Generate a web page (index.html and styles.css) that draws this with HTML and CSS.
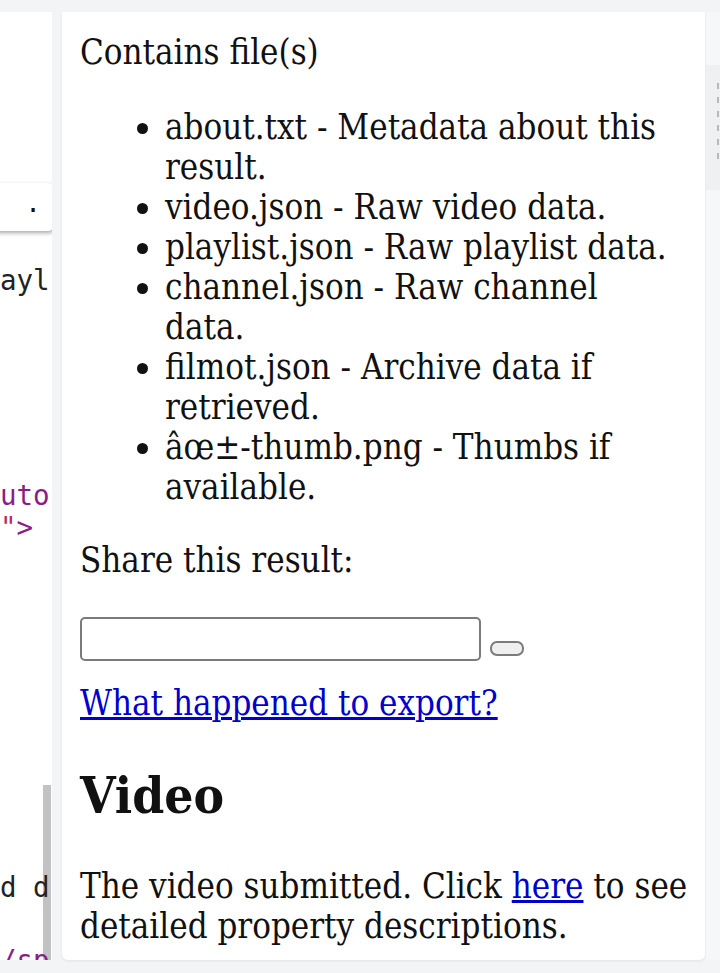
FILE: index.html
```html
<!DOCTYPE html>
<html lang="en">
<head>
<meta charset="utf-8">
<title>Result</title>
<link rel="stylesheet" href="styles.css">
</head>
<body>
<div class="layout">
  <aside class="code-pane">
    <div class="scrollbar"></div>
    <div class="hl-line">
      <span class="copy-btn">.</span>
    </div>
    <div class="code l-ayl">ayl</div>
    <div class="code l-uto purple">uto</div>
    <div class="code l-q"><span class="red">"</span><span class="purple">&gt;</span></div>
    <div class="code l-dd">d d</div>
    <div class="code l-sp purple">/sp</div>
  </aside>
  <main class="card">
    <p class="contains">Contains file(s)</p>
    <ul class="files">
      <li>about.txt - Metadata about this result.</li>
      <li>video.json - Raw video data.</li>
      <li>playlist.json - Raw playlist data.</li>
      <li>channel.json - Raw channel data.</li>
      <li>filmot.json - Archive data if retrieved.</li>
      <li>âœ±-thumb.png - Thumbs if available.</li>
    </ul>
    <p class="share">Share this result:</p>
    <div class="share-row">
      <input class="share-input" type="text" aria-label="Share link">
      <button class="copy" type="button" aria-label="Copy"></button>
    </div>
    <p class="export"><a href="#">What happened to export?</a></p>
    <h2 class="section">Video</h2>
    <p class="desc">The video submitted. Click <a href="#">here</a> to see detailed property descriptions.</p>
  </main>
  <aside class="side-pane">
    <div class="side-box">
      <span></span><span></span><span></span><span></span><span></span><span></span>
    </div>
  </aside>
</div>
</body>
</html>
```
FILE: styles.css
```css
html, body {
  margin: 0;
  padding: 0;
}
body {
  background: #f3f4f6;
  width: 720px;
  height: 973px;
  overflow: hidden;
}
.layout {
  display: flex;
  padding-top: 12px;
  height: 948px;
}
.code-pane {
  width: 52px;
  flex: none;
  background: #ffffff;
  position: relative;
  overflow: hidden;
  font-family: "DejaVu Sans Mono", monospace;
  font-size: 27.5px;
  line-height: 32px;
  color: #222;
  white-space: nowrap;
}
.hl-line {
  position: relative;
  margin-top: 178px;
  margin-left: 28px;
  height: 36px;
  background: #ebebeb;
}
.copy-btn {
  position: absolute;
  left: -40px;
  top: -7px;
  width: 66px;
  height: 48px;
  box-sizing: border-box;
  background: #fff;
  border-radius: 6px;
  box-shadow: 1px 2px 4px rgba(0,0,0,0.35);
  text-align: right;
  padding-right: 13px;
  line-height: 40px;
  font-size: 26px;
  color: #111;
}
.code {
  position: relative;
  height: 32px;
}
.l-ayl { margin-top: 38px; }
.l-uto { margin-top: 183px; }
.l-dd { margin-top: 328px; }
.l-sp { margin-top: 41px; }
.purple { color: #8a1d87; }
.red { color: #b0306a; }
.scrollbar {
  position: absolute;
  left: 43px;
  top: 773px;
  width: 8px;
  height: 175px;
  background: #c2c2c2;
}
.card {
  width: 643px;
  flex: none;
  margin-left: 10px;
  box-sizing: border-box;
  background: #ffffff;
  border-radius: 0 0 6px 6px;
  box-shadow: 0 1px 3px rgba(0,0,0,0.08);
  padding: 20px 8px 0 18px;
  font-family: "DejaVu Serif Condensed", "DejaVu Serif", "Liberation Serif", serif;
  font-stretch: condensed;
  font-size: 34.6px;
  line-height: 40px;
  color: #111;
}
.card p { margin: 0; }
.files {
  margin: 35px 0 0 0;
  padding: 0 22px 0 85px;
}
.share { margin-top: 33px !important; }
.share-row {
  display: flex;
  align-items: flex-end;
  margin-top: 37px;
}
.share-input {
  width: 401px;
  height: 44px;
  box-sizing: border-box;
  border: 2px solid #7b7b7b;
  border-radius: 5px;
  background: #fff;
  margin: 0;
  padding: 0;
}
.copy {
  width: 34px;
  height: 15px;
  margin: 0 0 5px 9px;
  padding: 0;
  box-sizing: border-box;
  border: 2px solid #7b7b7b;
  border-radius: 7px;
  background: #efefef;
}
.export { margin-top: 22px !important; }
a { color: #0000cc; }
.section {
  margin: 42px 0 0 0;
  font-size: 51px;
  line-height: 60px;
  font-weight: bold;
}
.desc { margin-top: 41px !important; }
.side-pane {
  flex: 1;
  margin-left: 1px;
  background: #f6f7f9;
}
.side-box {
  margin-top: 53px;
  height: 125px;
  background: #eef0f2;
  display: flex;
  flex-direction: column;
  align-items: flex-end;
  padding: 18px 1px 0 0;
  box-sizing: border-box;
  gap: 8px;
}
.side-box span {
  width: 2px;
  height: 6px;
  background: #b8b8b8;
}
```
